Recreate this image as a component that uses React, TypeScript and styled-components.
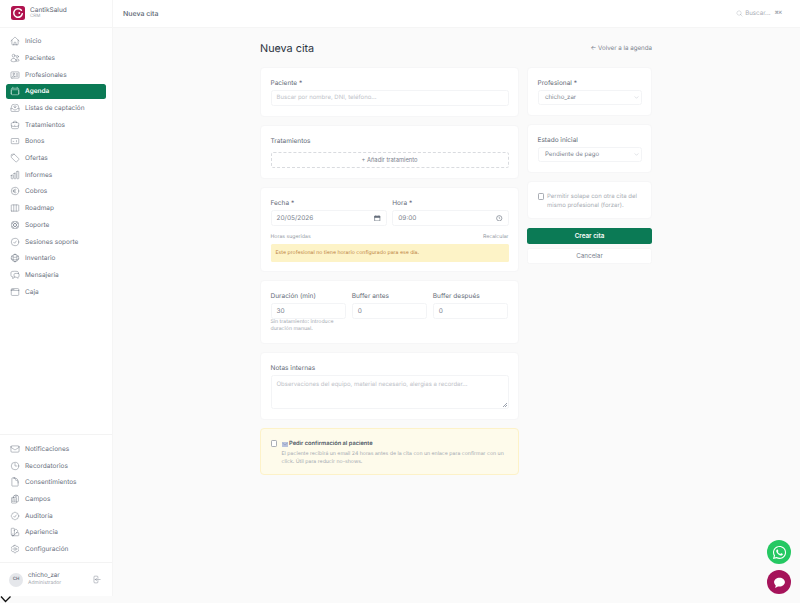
import styled, { createGlobalStyle } from "styled-components";
import type { ComponentType } from "react";
import {
  HiOutlineHome,
  HiOutlineUsers,
  HiOutlineIdentification,
  HiOutlineCalendar,
  HiOutlineInboxArrowDown,
  HiOutlineBriefcase,
  HiOutlineTag,
  HiOutlineChartBar,
  HiOutlineCurrencyEuro,
  HiOutlineViewColumns,
  HiOutlineLifebuoy,
  HiOutlineCheckCircle,
  HiOutlineGlobeAlt,
  HiOutlineChatBubbleLeftRight,
  HiOutlineWindow,
  HiOutlineEnvelope,
  HiOutlineClock,
  HiOutlineDocument,
  HiOutlineClipboardDocumentList,
  HiOutlineCheckBadge,
  HiOutlineSwatch,
  HiOutlineCog6Tooth,
  HiOutlineArrowLeftOnRectangle,
  HiOutlineMagnifyingGlass,
  HiOutlineChevronDown,
} from "react-icons/hi2";
import { FaWhatsapp } from "react-icons/fa";

const GlobalStyle = createGlobalStyle`
  html, body {
    margin: 0;
    padding: 0;
    background: #fafafa;
    overflow: hidden;
  }
  * {
    box-sizing: border-box;
  }
  body {
    font-family: Inter, "Liberation Sans", sans-serif;
    color: #374151;
    text-rendering: geometricPrecision;
  }
`;

const BonosIcon = ({ size }: { size?: number }) => (
  <svg width={size} height={size} viewBox="0 0 24 24" fill="none" stroke="currentColor" strokeWidth="1.2">
    <rect x="3" y="6" width="18" height="12.500" rx="1.500" />
    <path d="M6.500 13h3.500M15.500 10v5" />
  </svg>
);

type NavEntry = { label: string; icon: ComponentType<{ size?: number }>; active?: boolean };

const mainNav: NavEntry[] = [
  { label: "Inicio", icon: HiOutlineHome },
  { label: "Pacientes", icon: HiOutlineUsers },
  { label: "Profesionales", icon: HiOutlineIdentification },
  { label: "Agenda", icon: HiOutlineCalendar, active: true },
  { label: "Listas de captación", icon: HiOutlineInboxArrowDown },
  { label: "Tratamientos", icon: HiOutlineBriefcase },
  { label: "Bonos", icon: BonosIcon },
  { label: "Ofertas", icon: HiOutlineTag },
  { label: "Informes", icon: HiOutlineChartBar },
  { label: "Cobros", icon: HiOutlineCurrencyEuro },
  { label: "Roadmap", icon: HiOutlineViewColumns },
  { label: "Soporte", icon: HiOutlineLifebuoy },
  { label: "Sesiones soporte", icon: HiOutlineCheckCircle },
  { label: "Inventario", icon: HiOutlineGlobeAlt },
  { label: "Mensajería", icon: HiOutlineChatBubbleLeftRight },
  { label: "Caja", icon: HiOutlineWindow },
];

const bottomNav: NavEntry[] = [
  { label: "Notificaciones", icon: HiOutlineEnvelope },
  { label: "Recordatorios", icon: HiOutlineClock },
  { label: "Consentimientos", icon: HiOutlineDocument },
  { label: "Campos", icon: HiOutlineClipboardDocumentList },
  { label: "Auditoría", icon: HiOutlineCheckBadge },
  { label: "Apariencia", icon: HiOutlineSwatch },
  { label: "Configuración", icon: HiOutlineCog6Tooth },
];

const Shell = styled.div`
  display: flex;
  position: relative;
  width: 800px;
  height: 603px;
  overflow: hidden;
  background: #fafafa;
  opacity: 0.999;
`;

const Sidebar = styled.aside`
  display: flex;
  flex-direction: column;
  flex: none;
  width: 113px;
  height: 596px;
  background: #fff;
  border-right: 1px solid #f5f5f5;
`;

const Brand = styled.div`
  display: flex;
  align-items: center;
  gap: 5px;
  flex: none;
  height: 27.5px;
  padding: 0 11px;
  border-bottom: 1px solid #f5f5f5;
`;

const BrandText = styled.div`
  display: flex;
  flex-direction: column;
`;

const BrandName = styled.span`
  font-size: 6.5px;
  line-height: 8px;
  color: #5b6472;
`;

const BrandSub = styled.span`
  font-size: 4.5px;
  line-height: 6px;
  color: #a3a8b0;
`;

const NavList = styled.nav<{ $bottom?: boolean }>`
  display: flex;
  flex-direction: column;
  gap: 1.2px;
  flex: ${(p) => (p.$bottom ? "none" : 1)};
  padding: ${(p) => (p.$bottom ? "6.3px 6px 5.3px" : "6px 6px")};
  border-top: ${(p) => (p.$bottom ? "1px solid #f3f3f3" : "none")};
`;

const NavItem = styled.a<{ $active?: boolean }>`
  display: flex;
  align-items: center;
  gap: 5px;
  height: 15.5px;
  padding: 0 4px;
  border-radius: 2.5px;
  font-size: 6.5px;
  font-weight: ${(p) => (p.$active ? 600 : 400)};
  color: ${(p) => (p.$active ? "#fff" : "#6b7280")};
  background: ${(p) => (p.$active ? "#0b7a55" : "transparent")};
  white-space: nowrap;
  svg {
    flex: none;
    stroke-width: 1.2;
    color: ${(p) => (p.$active ? "#e6f2ee" : "#757c88")};
  }
`;

const UserBox = styled.div`
  display: flex;
  align-items: center;
  gap: 5px;
  flex: none;
  height: 34px;
  padding: 0 11px 0 9px;
  border-top: 1px solid #f3f3f3;
`;

const Avatar = styled.div`
  display: flex;
  align-items: center;
  justify-content: center;
  flex: none;
  width: 14px;
  height: 14px;
  border-radius: 50%;
  background: #e5e7eb;
  color: #6b7280;
  font-size: 4.5px;
  font-weight: 600;
`;

const UserText = styled.div`
  display: flex;
  flex-direction: column;
  flex: 1;
`;

const UserName = styled.span`
  font-size: 6.2px;
  line-height: 8px;
  color: #5b6472;
`;

const UserRole = styled.span`
  font-size: 5px;
  line-height: 7px;
  color: #a3a8b0;
`;

const LogoutIcon = styled(HiOutlineArrowLeftOnRectangle)`
  color: #757c88;
  stroke-width: 1.2;
`;

const MainArea = styled.main`
  display: flex;
  flex-direction: column;
  flex: 1;
  min-width: 0;
`;

const TopBar = styled.header`
  display: flex;
  align-items: center;
  justify-content: space-between;
  flex: none;
  height: 27.5px;
  padding: 0 18px 0 10px;
  background: #fff;
  border-bottom: 1px solid #f5f5f5;
`;

const TopTitle = styled.span`
  font-size: 7px;
  font-weight: 500;
  color: #5b6472;
`;

const SearchBox = styled.div`
  display: flex;
  align-items: center;
  gap: 2.5px;
  font-size: 6.2px;
  color: #a9adb4;
  svg {
    stroke-width: 1.2;
    color: #a3a8b0;
  }
`;

const Kbd = styled.span`
  margin-left: 1.5px;
  font-size: 4.5px;
  color: #757c88;
`;

const Content = styled.div`
  width: 392px;
  margin-left: 147px;
`;

const TitleRow = styled.div`
  display: flex;
  align-items: center;
  justify-content: space-between;
  height: 39.5px;
  padding-top: 2px;
`;

const PageTitle = styled.h1`
  margin: 0;
  font-size: 10.8px;
  font-weight: 400;
  color: #2b3340;
`;

const BackLink = styled.a`
  font-size: 6.2px;
  color: #7b828e;
`;

const FormGrid = styled.div`
  display: grid;
  grid-template-columns: 259px 125px;
  gap: 8px;
  align-items: start;
`;

const Column = styled.div`
  display: flex;
  flex-direction: column;
  gap: 8.5px;
`;

const Card = styled.section<{ $tight?: boolean }>`
  padding: 9.5px;
  padding-bottom: ${(p) => (p.$tight ? 8.5 : 9.5)}px;
  background: #fff;
  border: 1px solid #f6f6f7;
  border-radius: 4px;
`;

const WarnCard = styled(Card)`
  padding: 11px 9.5px 8px;
  background: #fefbeb;
  border-color: #fdf2c8;
`;

const Label = styled.label`
  display: block;
  margin-bottom: 2px;
  font-size: 6.5px;
  line-height: 10px;
  color: #656c78;
`;

const Input = styled.div<{ $placeholder?: boolean }>`
  display: flex;
  align-items: center;
  justify-content: space-between;
  height: 16.5px;
  padding: 0 5px;
  background: #fff;
  border: 1px solid #f3f4f6;
  border-radius: 2.5px;
  font-size: ${(p) => (p.$placeholder ? 6 : 6.5)}px;
  color: ${(p) => (p.$placeholder ? "#c0c3c9" : "#7b828e")};
  white-space: nowrap;
`;

const Select = styled(Input)`
  height: 15.5px;
  padding: 0 2px 0 6.5px;
  font-size: 6.1px;
  svg {
    flex: none;
    stroke-width: 1.5;
    color: #9ca3af;
  }
`;

const TextArea = styled(Input)`
  position: relative;
  align-items: flex-start;
  height: 34.5px;
  padding-top: 5px;
  &::after {
    content: "";
    position: absolute;
    right: 1px;
    bottom: 1px;
    width: 4px;
    height: 4px;
    background: linear-gradient(135deg, transparent 45%, #9ca3af 45%, #9ca3af 58%, transparent 58%, transparent 72%, #9ca3af 72%, #9ca3af 85%, transparent 85%);
  }
`;

const DashedButton = styled.button`
  display: block;
  width: 100%;
  height: 16.5px;
  margin-top: 6px;
  padding: 0;
  background: #fff;
  border: 1px dashed #d9dbdf;
  border-radius: 2.5px;
  font-family: inherit;
  font-size: 5.8px;
  color: #7b828e;
`;

const FieldRow = styled.div<{ $cols: string }>`
  display: grid;
  grid-template-columns: ${(p) => p.$cols};
  gap: 5.5px;
`;

const SuggestHead = styled.div`
  display: flex;
  justify-content: space-between;
  margin-top: 8px;
  font-size: 5.2px;
  line-height: 7px;
  color: #9097a1;
`;

const Alert = styled.div`
  display: flex;
  align-items: center;
  height: 18px;
  margin-top: 3px;
  padding: 0 5px;
  background: #fdf3c7;
  border-radius: 1.5px;
  font-size: 5.2px;
  color: #bb8040;
`;

const Help = styled.p`
  margin: 0;
  font-size: 5.2px;
  line-height: 7px;
  color: #a3a8b0;
`;

const Check = styled.span`
  display: block;
  flex: none;
  width: 6.5px;
  height: 6.5px;
  background: #fff;
  border: 1px solid #a9adb4;
  border-radius: 1.2px;
`;

const CheckRow = styled.div`
  display: flex;
  align-items: flex-start;
  gap: 3px;
  font-size: 6px;
  line-height: 9px;
  color: #a9adb4;
  ${Check} {
    margin-top: 1.5px;
  }
`;

const ConfirmRow = styled.div`
  display: flex;
  gap: 4.5px;
`;

const ConfirmTitle = styled.div`
  display: flex;
  align-items: center;
  gap: 1.5px;
  font-size: 5.7px;
  line-height: 8px;
  font-weight: 600;
  color: #4b5563;
`;

const ConfirmText = styled.p`
  margin: 2px 0 0;
  font-size: 5.2px;
  line-height: 8px;
  color: #a3a8b0;
`;

const PrimaryButton = styled.button`
  height: 16px;
  padding: 0;
  background: #0b7a55;
  border: 0;
  border-radius: 2.5px;
  font-family: inherit;
  font-size: 6.3px;
  font-weight: 600;
  color: #fff;
`;

const GhostButton = styled.button`
  height: 16px;
  margin-top: -4.5px;
  padding: 0;
  background: #fff;
  border: 1px solid #f6f6f7;
  border-radius: 2.5px;
  font-family: inherit;
  font-size: 6.3px;
  color: #7b828e;
`;

const Fab = styled.button<{ $bg: string; $bottom: number }>`
  position: absolute;
  right: 9px;
  bottom: ${(p) => p.$bottom}px;
  display: flex;
  align-items: center;
  justify-content: center;
  width: 24px;
  height: 24px;
  padding: 0;
  border: 0;
  border-radius: 50%;
  background: ${(p) => p.$bg};
  color: #fff;
`;

const CornerChevron = styled.svg`
  position: absolute;
  left: 0;
  bottom: 0;
  width: 12px;
  height: 7px;
`;

const Logo = () => (
  <svg width="14" height="14" viewBox="0 0 14 14">
    <rect width="14" height="14" rx="2.5" fill="#b0134f" />
    <path d="M10.4 4.300a4.300 4.300 0 1 0 .9 3.400" fill="none" stroke="#fff" strokeWidth="1.5" strokeLinecap="round" />
    <circle cx="8.300" cy="7" r="0.900" fill="#fff" />
  </svg>
);

const MailGlyph = () => (
  <svg width="6" height="5" viewBox="0 0 12 10">
    <rect width="12" height="10" rx="1" fill="#b9c2dc" />
    <path d="M.5 1.500L6 6l5.500-4.500" fill="none" stroke="#7f8cb4" strokeWidth="1" />
  </svg>
);

const DateIcon = () => (
  <svg width="6.500" height="6.500" viewBox="0 0 16 16">
    <path d="M1.500 3h13v11.500h-13z" fill="none" stroke="#5b6472" strokeWidth="1.500" />
    <path d="M1.500 3h13v3h-13zM4 1v2M12 1v2" fill="#5b6472" stroke="#5b6472" strokeWidth="1.200" />
  </svg>
);

const TimeIcon = () => (
  <svg width="6.500" height="6.500" viewBox="0 0 16 16">
    <circle cx="8" cy="8" r="6.500" fill="none" stroke="#5b6472" strokeWidth="1.400" />
    <path d="M8 4.500V8l2.500 1.500" fill="none" stroke="#5b6472" strokeWidth="1.200" />
  </svg>
);

const App = () => {
  return (
    <Shell>
      <GlobalStyle />
      <Sidebar>
        <Brand>
          <Logo />
          <BrandText>
            <BrandName>CantikSalud</BrandName>
            <BrandSub>CRM</BrandSub>
          </BrandText>
        </Brand>
        <NavList>
          {mainNav.map(({ label, icon: Icon, active }) => (
            <NavItem key={label} $active={active}>
              <Icon size={10} />
              {label}
            </NavItem>
          ))}
        </NavList>
        <NavList $bottom>
          {bottomNav.map(({ label, icon: Icon }) => (
            <NavItem key={label}>
              <Icon size={10} />
              {label}
            </NavItem>
          ))}
        </NavList>
        <UserBox>
          <Avatar>CH</Avatar>
          <UserText>
            <UserName>chicho_zar</UserName>
            <UserRole>Administrador</UserRole>
          </UserText>
          <LogoutIcon size={9} />
        </UserBox>
      </Sidebar>

      <MainArea>
        <TopBar>
          <TopTitle>Nueva cita</TopTitle>
          <SearchBox>
            <HiOutlineMagnifyingGlass size={7} />
            Buscar...
            <Kbd>⌘K</Kbd>
          </SearchBox>
        </TopBar>

        <Content>
          <TitleRow>
            <PageTitle>Nueva cita</PageTitle>
            <BackLink>← Volver a la agenda</BackLink>
          </TitleRow>

          <FormGrid>
            <Column>
              <Card>
                <Label>Paciente *</Label>
                <Input $placeholder>Buscar por nombre, DNI, teléfono...</Input>
              </Card>
              <Card>
                <Label>Tratamientos</Label>
                <DashedButton>+ Añadir tratamiento</DashedButton>
              </Card>
              <Card $tight>
                <FieldRow $cols="1fr 1fr">
                  <div>
                    <Label>Fecha *</Label>
                    <Input>
                      20/05/2026
                      <DateIcon />
                    </Input>
                  </div>
                  <div>
                    <Label>Hora *</Label>
                    <Input>
                      09:00
                      <TimeIcon />
                    </Input>
                  </div>
                </FieldRow>
                <SuggestHead>
                  <span>Horas sugeridas</span>
                  <span>Recalcular</span>
                </SuggestHead>
                <Alert>Este profesional no tiene horario configurado para ese día.</Alert>
              </Card>
              <Card>
                <FieldRow $cols="1fr 1fr 1fr">
                  <div>
                    <Label>Duración (min)</Label>
                    <Input>30</Input>
                    <Help>Sin tratamiento: introduce duración manual.</Help>
                  </div>
                  <div>
                    <Label>Buffer antes</Label>
                    <Input>0</Input>
                  </div>
                  <div>
                    <Label>Buffer después</Label>
                    <Input>0</Input>
                  </div>
                </FieldRow>
              </Card>
              <Card>
                <Label>Notas internas</Label>
                <TextArea $placeholder>Observaciones del equipo, material necesario, alergias a recordar...</TextArea>
              </Card>
              <WarnCard>
                <ConfirmRow>
                  <Check />
                  <div>
                    <ConfirmTitle>
                      <MailGlyph />
                      Pedir confirmación al paciente
                    </ConfirmTitle>
                    <ConfirmText>
                      El paciente recibirá un email 24 horas antes de la cita con un enlace para confirmar con un
                      click. Útil para reducir no-shows.
                    </ConfirmText>
                  </div>
                </ConfirmRow>
              </WarnCard>
            </Column>

            <Column>
              <Card>
                <Label>Profesional *</Label>
                <Select>
                  chicho_zar
                  <HiOutlineChevronDown size={5} />
                </Select>
              </Card>
              <Card>
                <Label>Estado inicial</Label>
                <Select>
                  Pendiente de pago
                  <HiOutlineChevronDown size={5} />
                </Select>
              </Card>
              <Card $tight>
                <CheckRow>
                  <Check />
                  <span>Permitir solape con otra cita del mismo profesional (forzar).</span>
                </CheckRow>
              </Card>
              <PrimaryButton>Crear cita</PrimaryButton>
              <GhostButton>Cancelar</GhostButton>
            </Column>
          </FormGrid>
        </Content>
      </MainArea>

      <Fab $bg="#25c862" $bottom={39}>
        <FaWhatsapp size={15} />
      </Fab>
      <Fab $bg="#a5135a" $bottom={9}>
        <svg width="13" height="13" viewBox="0 0 24 24" fill="#fff">
          <path d="M12 3c5.500 0 10 3.600 10 8.300s-4.500 8.300-10 8.300c-1 0-2-.1-2.900-.4L4 22l1.100-4.600C3.200 15.900 2 13.700 2 11.300 2 6.600 6.500 3 12 3z" />
        </svg>
      </Fab>
      <CornerChevron viewBox="0 0 12 7">
        <path d="M1 .5l4.500 5 5-5" fill="none" stroke="#111" strokeWidth="1.300" />
      </CornerChevron>
    </Shell>
  );
};

export default App;
